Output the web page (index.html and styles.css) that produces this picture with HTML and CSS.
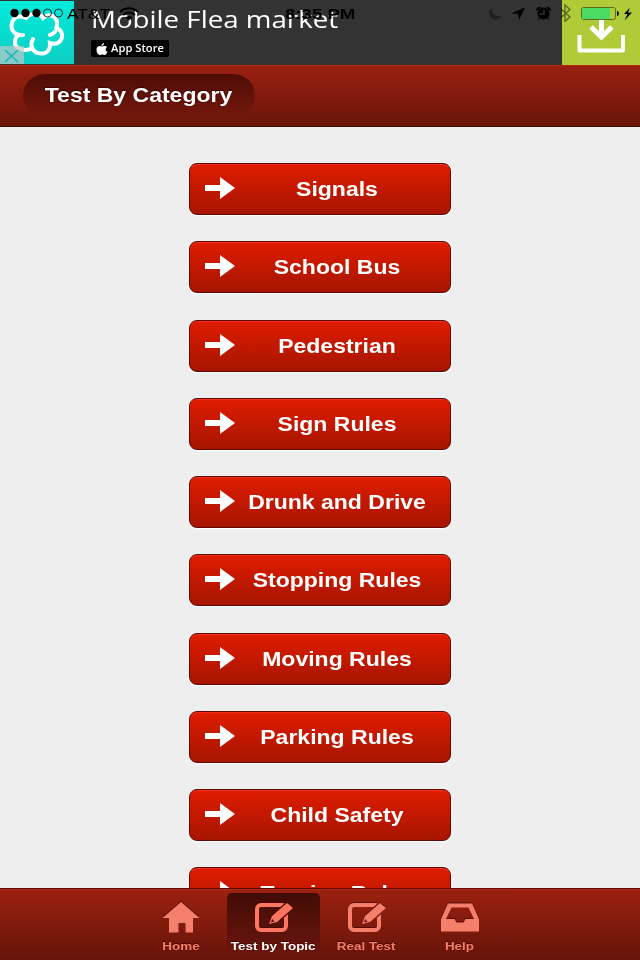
FILE: index.html
```html
<!DOCTYPE html>
<html lang="en">
<head>
    <meta charset="UTF-8">
    <meta name="viewport" content="width=device-width, initial-scale=1.0">
    <title>Test By Category</title>
    <link rel="stylesheet" href="styles.css">
</head>
<body>
    <!-- Shared icons -->
    <svg class="symbols">
        <symbol id="arrow" viewBox="0 0 30 22">
            <path d="M0 8h15V0l15 11-15 11v-8H0z"/>
        </symbol>
        <symbol id="edit" viewBox="0 0 42 32">
            <mask id="pencil-gap">
                <rect width="42" height="32" fill="#fff"/>
                <path d="M16 23l3-8L34 2l6 5-16 14z" fill="#000" stroke="#000" stroke-width="2.5"/>
            </mask>
            <rect x="4" y="4" width="29" height="25" rx="4" fill="none" stroke="currentColor" stroke-width="4" mask="url(#pencil-gap)"/>
            <path fill-rule="evenodd" d="M16 23l3-8L34 2l6 5-16 14zM18 21.500l3.500-1-2.300-2.500z"/>
        </symbol>
    </svg>

    <!-- Ad Banner -->
    <div class="ad">
        <div class="ad-icon">
            <svg width="74" height="65" viewBox="0 0 74 65">
                <path d="M23 34C15 35 10 29 12 22 14 15 20 14 26 17 30 12 40 11 43 17 50 11 58 16 57 24 57 29 54 33 50 34M56 27c7 2 8 10 3 14-2 2-6 2-9 1C51 49 46 53 41 52.500 33 52 29 45 33 38M32 47C26 51 14 48 15 41 15 38 16 36 18 34" fill="none" stroke="#fff" stroke-width="4" stroke-linecap="round"/>
            </svg>
            <div class="ad-close">
                <svg width="24" height="19" viewBox="0 0 24 19">
                    <path d="M5 4l13 12M18 4L5 16" stroke="#18b5c4" stroke-width="1.6"/>
                </svg>
            </div>
        </div>
        <div class="ad-body">
            <div class="ad-title"><span>Mobile Flea market</span></div>
            <div class="store">
                <svg width="12" height="12" viewBox="0 0 12 12">
                    <path d="M8 0c0 2-1 3-2.500 3C5.500 1.500 6.500.4 8 0zM6 3.500c.8 0 1.400-.5 2.500-.5 1.100 0 2 .5 2.500 1.200-2 1.300-1.600 3.800.5 4.600C10.800 10.800 9.800 12 8.700 12 7.700 12 7.300 11.500 6.200 11.500 5.200 11.500 4.600 12 3.800 12 2.200 12 .5 9.400.5 6.700.5 4.300 2 3 3.600 3c1 0 1.700.5 2.400.5z" fill="#fff"/>
                </svg>
                <span>App Store</span>
            </div>
        </div>
        <div class="ad-download">
            <svg width="78" height="65" viewBox="0 0 78 65">
                <path d="M17.500 35v15.500h43.500V35" fill="none" stroke="#fff" stroke-width="4" stroke-linejoin="round"/>
                <path d="M39.500 18v18M29 27l10.500 10L50 27" fill="none" stroke="#fff" stroke-width="5"/>
            </svg>
        </div>

        <!-- Phone status bar, drawn over the ad -->
        <div class="phone-status">
            <svg class="dots" width="56" height="10" viewBox="0 0 56 10">
                <circle cx="4.500" cy="5" r="4.200"/>
                <circle cx="15.500" cy="5" r="4.200"/>
                <circle cx="26.500" cy="5" r="4.200"/>
                <g fill="none" stroke="#000" stroke-width=".8">
                    <circle cx="37.500" cy="5" r="4"/>
                    <circle cx="48.500" cy="5" r="4"/>
                </g>
            </svg>
            <span class="carrier">AT&amp;T</span>
            <svg class="wifi" width="20" height="14" viewBox="0 0 20 14">
                <path d="M1 5c5-5 13-5 18 0M4 8c3.500-3.500 8.500-3.500 12 0" fill="none" stroke="#000" stroke-width="2"/>
                <path d="M6.500 10.500c2-2 5-2 7 0L10 13.500z"/>
            </svg>
            <span class="clock">8:35 PM</span>
            <svg class="indicators" width="150" height="20" viewBox="0 0 150 20">
                <path d="M3.500 5.500A6.500 6.500 0 1 0 12.500 14C6.500 15.500 2 11 3.500 5.500z" fill="#202020"/>
                <path d="M36 5.500L22 11.500l7 .3 1 6.200z"/>
                <g>
                    <circle cx="54.500" cy="11.500" r="6"/>
                    <path d="M47.500 8.500a3 3 0 0 1 4-3zM61.500 8.500a3 3 0 0 0-4-3zM50.500 16l-1.500 2M58.500 16l1.500 2" stroke="#000"/>
                    <path d="M55 8v4H50.500" fill="none" stroke="#444" stroke-width="1.200"/>
                </g>
                <path d="M72 7l9 8-5 4.500V3l5 4.500-9 8" fill="none" stroke="#000" stroke-opacity=".5" stroke-width="1.300"/>
                <rect x="92.500" y="5.500" width="34" height="12" rx="2" fill="none" stroke="#5b6b1d"/>
                <rect x="93" y="6" width="28" height="11" rx="1" fill="#4cd964"/>
                <path d="M128 9c2.500 0 2.500 5 0 5z"/>
                <path d="M141 5.500l-6 6.500h3.500l-3 6.500 7.500-8h-4z"/>
            </svg>
        </div>
    </div>

    <!-- Header -->
    <div class="header">
        <div class="title"><h1>Test By Category</h1></div>
    </div>

    <!-- Category List -->
    <div class="categories">
        <a class="category"><svg><use href="#arrow"/></svg><span>Signals</span></a>
        <a class="category"><svg><use href="#arrow"/></svg><span>School Bus</span></a>
        <a class="category"><svg><use href="#arrow"/></svg><span>Pedestrian</span></a>
        <a class="category"><svg><use href="#arrow"/></svg><span>Sign Rules</span></a>
        <a class="category"><svg><use href="#arrow"/></svg><span>Drunk and Drive</span></a>
        <a class="category"><svg><use href="#arrow"/></svg><span>Stopping Rules</span></a>
        <a class="category"><svg><use href="#arrow"/></svg><span>Moving Rules</span></a>
        <a class="category"><svg><use href="#arrow"/></svg><span>Parking Rules</span></a>
        <a class="category"><svg><use href="#arrow"/></svg><span>Child Safety</span></a>
        <a class="category"><svg><use href="#arrow"/></svg><span>Turning Rules</span></a>
    </div>

    <!-- Tab Bar -->
    <div class="tabs">
        <a class="tab">
            <svg viewBox="0 0 42 32"><path d="M21 1l18.500 16H33v14.500h-7.500V22h-7v9.500H9V17H2.500z"/></svg>
            <span>Home</span>
        </a>
        <a class="tab active">
            <svg viewBox="0 0 42 32"><use href="#edit"/></svg>
            <span>Test by Topic</span>
        </a>
        <a class="tab">
            <svg viewBox="0 0 42 32"><use href="#edit"/></svg>
            <span>Real Test</span>
        </a>
        <a class="tab">
            <svg viewBox="0 0 42 32"><path fill-rule="evenodd" d="M9 2.500h24L40 18v12.500H2V18zM12.500 6.500L7 18h8.500l2 3.500h7l2-3.500H35L29.500 6.500z"/></svg>
            <span>Help</span>
        </a>
    </div>
</body>
</html>
```

FILE: styles.css
```css
/* General Styles */
body {
    font-family: 'Liberation Sans', Arial, sans-serif;
    margin: 0;
    height: 960px;
    display: flex;
    flex-direction: column;
    overflow: hidden;
    background: #eee;
    color: #fff;
}

svg {
    display: block;
    flex: none;
}

.symbols {
    position: absolute;
    width: 0;
    height: 0;
}

/* Ad Banner */
.ad {
    position: relative;
    display: flex;
    flex: none;
    height: 65px;
    background: #333;
}

.ad-icon {
    position: relative;
    width: 74px;
    margin: 1px 0;
    background: linear-gradient(#00eadb, #0dcfc3);
    overflow: hidden;
}

.ad-close {
    position: absolute;
    left: 0;
    bottom: -1px;
    background: rgba(190, 200, 200, 0.7);
}

.ad-body {
    flex: 1;
    padding-left: 17px;
}

.ad-title {
    height: 40px;
    font: 24px/38px 'Open Sans', sans-serif;
    white-space: nowrap;
}

.ad-title span {
    display: inline-block;
    transform: scaleX(1.155);
    transform-origin: left;
}

.store {
    display: flex;
    align-items: center;
    gap: 3px;
    box-sizing: border-box;
    width: 78px;
    height: 17px;
    padding-left: 5px;
    border-radius: 2px;
    background: #000;
    font: 600 10px/17px 'Open Sans', sans-serif;
    white-space: nowrap;
}

.store span {
    transform: scaleX(1.12);
    transform-origin: left;
}

.ad-download {
    width: 78px;
    background: #b0cb38;
}

/* Phone Status Bar */
.phone-status {
    position: absolute;
    top: 0;
    left: 0;
    width: 100%;
    height: 28px;
    color: #000;
    font-size: 15.5px;
    line-height: 28px;
}

.phone-status > * {
    position: absolute;
    transform-origin: left;
}

.dots {
    left: 10px;
    top: 8px;
}

.carrier {
    left: 67px;
    transform: scaleX(1.12);
}

.wifi {
    left: 119px;
    top: 7px;
}

.clock {
    left: 285px;
    font-weight: bold;
    white-space: nowrap;
    transform: scaleX(1.2);
}

.indicators {
    left: 489px;
    top: 2px;
}

/* Header */
.header {
    box-sizing: border-box;
    flex: none;
    height: 62px;
    padding: 8px 23px;
    border-top: 1px solid #bd2411;
    border-bottom: 1px solid #3c0804;
    background: linear-gradient(#9a2010, #6a150b);
}

.title {
    display: flex;
    align-items: center;
    justify-content: center;
    width: 232px;
    height: 43px;
    border-radius: 22px;
    background: linear-gradient(#4f0d06, #73170c);
}

.title h1 {
    margin: 0;
    padding-bottom: 2px;
    font-size: 20px;
    line-height: 40px;
    white-space: nowrap;
    text-shadow: 0 -1px 1px #300;
    transform: scaleX(1.15);
}

/* Category List */
.categories {
    display: flex;
    flex: 1;
    flex-direction: column;
    align-items: center;
    gap: 26.25px;
    min-height: 0;
    padding-top: 36px;
    overflow: hidden;
}

.category {
    display: flex;
    flex: none;
    align-items: center;
    box-sizing: border-box;
    width: 262px;
    height: 52px;
    border: 1px solid #5f0a02;
    border-radius: 8px;
    background: linear-gradient(#df1c00, #a61500);
    box-shadow: 0 1px 1px #fff, inset 0 1px 0 #f0301a;
}

.category svg {
    width: 30px;
    height: 22px;
    margin: -2px 0 0 15px;
    fill: #fff;
}

.category span {
    flex: 1;
    margin-right: 11px;
    padding-top: 1px;
    font-size: 19.5px;
    font-weight: bold;
    text-align: center;
    white-space: nowrap;
    transform: scaleX(1.18);
}

/* Tab Bar */
.tabs {
    display: flex;
    flex: none;
    justify-content: center;
    box-sizing: border-box;
    height: 72px;
    padding-top: 4px;
    border-top: 1px solid #5a0c04;
    background: linear-gradient(#9c2110, #66140a);
    box-shadow: inset 0 1px 0 #b02a17;
}

.tab {
    display: flex;
    flex-direction: column;
    align-items: center;
    width: 93px;
    height: 63px;
    border-radius: 5px;
    color: #f47f6b;
}

.tab svg {
    width: 42px;
    height: 32px;
    margin-top: 8px;
    fill: currentColor;
    filter: drop-shadow(0 -1px 0 rgba(60, 0, 0, 0.6));
}

.tab span {
    margin-top: 6px;
    font-size: 11.5px;
    font-weight: bold;
    line-height: 14px;
    white-space: nowrap;
    text-shadow: 0 -1px 0 #400;
    transform: scaleX(1.17);
}

.tab.active {
    background: linear-gradient(#420c06, #6c160c);
    color: #fff;
}

.tab.active svg {
    color: #ff7560;
}
```
